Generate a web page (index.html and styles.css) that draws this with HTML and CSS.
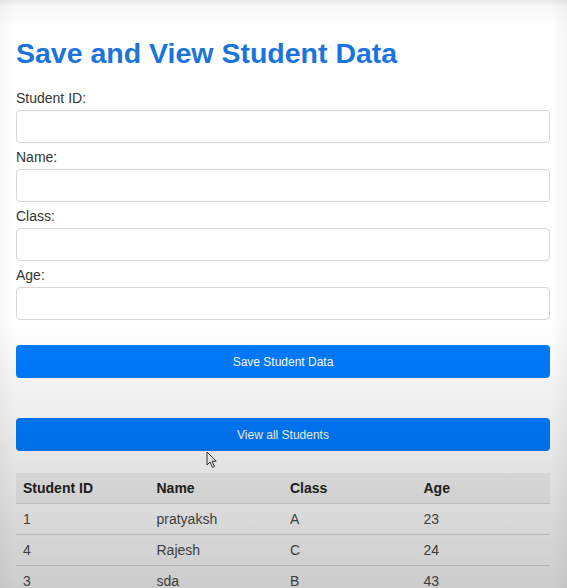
FILE: index.html
```html
<!DOCTYPE html>
<html lang="en">
<head>
<meta charset="utf-8">
<title>Save and View Student Data</title>
<link rel="stylesheet" href="styles.css">
</head>
<body>
<div class="card">
  <h1 class="title">Save and View Student Data</h1>
  <form class="form">
    <label class="label" for="sid">Student ID:</label>
    <input class="field" id="sid" type="text">
    <label class="label" for="name">Name:</label>
    <input class="field" id="name" type="text">
    <label class="label" for="cls">Class:</label>
    <input class="field" id="cls" type="text">
    <label class="label" for="age">Age:</label>
    <input class="field" id="age" type="text">
    <button class="btn btn-save" type="button">Save Student Data</button>
  </form>
  <button class="btn btn-view" type="button">View all Students</button>
  <table class="table">
    <thead>
      <tr><th>Student ID</th><th>Name</th><th>Class</th><th>Age</th></tr>
    </thead>
    <tbody>
      <tr><td>1</td><td>pratyaksh</td><td>A</td><td>23</td></tr>
      <tr><td>4</td><td>Rajesh</td><td>C</td><td>24</td></tr>
      <tr><td>3</td><td>sda</td><td>B</td><td>43</td></tr>
    </tbody>
  </table>
</div>
<svg class="cursor" width="12" height="18" viewBox="0 0 12 18" aria-hidden="true">
  <path d="M1 1 L1 14 L4 11 L6.5 16.5 L8.5 15.6 L6 10.2 L10.2 10.2 Z" fill="#fff" stroke="#333" stroke-width="1" stroke-linejoin="round"/>
</svg>
<div class="vignette"></div>
</body>
</html>
```
FILE: styles.css
```css
html, body {
  margin: 0;
  padding: 0;
}
body {
  background: #ffffff;
  font-family: "Liberation Sans", Arial, sans-serif;
  color: #333;
  height: 588px;
  overflow: hidden;
  position: relative;
}
.card {
  padding: 37px 17px 0 16px;
}
.title {
  margin: 0 0 19px;
  font-size: 28.5px;
  line-height: 32px;
  font-weight: bold;
  color: #1a74dc;
}
.form {
  display: flex;
  flex-direction: column;
}
.label {
  display: block;
  font-size: 14px;
  line-height: 20px;
  margin-bottom: 2px;
  color: #333;
}
.field {
  box-sizing: border-box;
  width: 100%;
  height: 33px;
  margin: 0 0 4px;
  border: 1px solid #d6d6d6;
  border-radius: 4px;
  background: #fff;
}
.btn {
  display: block;
  box-sizing: border-box;
  width: 100%;
  height: 33px;
  border: none;
  border-radius: 4px;
  background: #007bff;
  color: #fff;
  font-family: "Liberation Sans", Arial, sans-serif;
  font-size: 12px;
}
.btn-save {
  margin-top: 21px;
}
.btn-view {
  margin-top: 40px;
}
.table {
  width: 100%;
  margin-top: 22px;
  border-collapse: collapse;
  table-layout: fixed;
  font-size: 14px;
}
.table th, .table td {
  width: 25%;
  text-align: left;
  padding: 7px 7px;
  line-height: 16px;
  border-bottom: 1px solid #dcdcdc;
}
.table th {
  background: #f2f2f2;
  font-weight: bold;
  color: #222;
}
.table td {
  color: #4a4a4a;
}
.cursor {
  position: absolute;
  left: 206px;
  top: 451px;
}
.vignette {
  position: absolute;
  inset: 0;
  pointer-events: none;
  background:
    linear-gradient(to bottom, rgba(0,0,0,0.09) 0px, rgba(0,0,0,0.03) 6px, rgba(0,0,0,0) 28px),
    linear-gradient(to bottom, rgba(0,0,0,0) 320px, rgba(0,0,0,0.06) 400px, rgba(0,0,0,0.12) 480px, rgba(0,0,0,0.2) 588px),
    linear-gradient(to right, rgba(0,0,0,0.03) 0px, rgba(0,0,0,0) 14px, rgba(0,0,0,0) 552px, rgba(0,0,0,0.04) 567px);
}
```
